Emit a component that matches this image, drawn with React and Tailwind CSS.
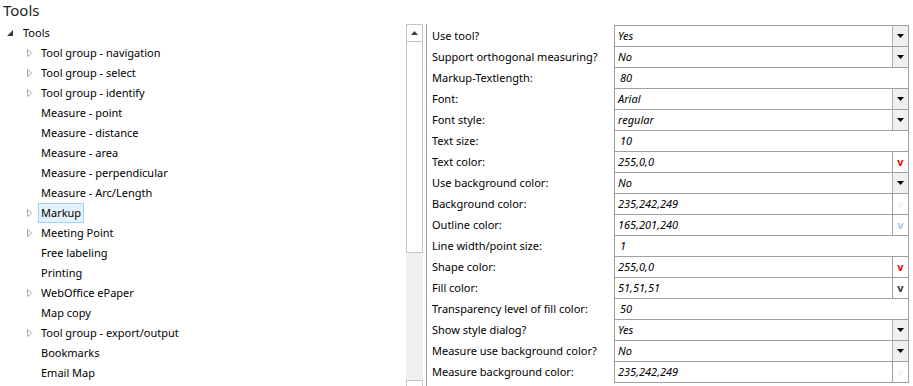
import React from 'react';

const tree = [
  { label: 'Tool group - navigation', expandable: true },
  { label: 'Tool group - select', expandable: true },
  { label: 'Tool group - identify', expandable: true },
  { label: 'Measure - point' },
  { label: 'Measure - distance' },
  { label: 'Measure - area' },
  { label: 'Measure - perpendicular' },
  { label: 'Measure - Arc/Length' },
  { label: 'Markup', expandable: true, selected: true },
  { label: 'Meeting Point', expandable: true },
  { label: 'Free labeling' },
  { label: 'Printing' },
  { label: 'WebOffice ePaper', expandable: true },
  { label: 'Map copy' },
  { label: 'Tool group - export/output', expandable: true },
  { label: 'Bookmarks' },
  { label: 'Email Map' },
];

const props = [
  { label: 'Use tool?', value: 'Yes', type: 'select' },
  { label: 'Support orthogonal measuring?', value: 'No', type: 'select' },
  { label: 'Markup-Textlength:', value: '80', type: 'text' },
  { label: 'Font:', value: 'Arial', type: 'select' },
  { label: 'Font style:', value: 'regular', type: 'select' },
  { label: 'Text size:', value: '10', type: 'text' },
  { label: 'Text color:', value: '255,0,0', type: 'color' },
  { label: 'Use background color:', value: 'No', type: 'select' },
  { label: 'Background color:', value: '235,242,249', type: 'color' },
  { label: 'Outline color:', value: '165,201,240', type: 'color' },
  { label: 'Line width/point size:', value: '1', type: 'text' },
  { label: 'Shape color:', value: '255,0,0', type: 'color' },
  { label: 'Fill color:', value: '51,51,51', type: 'color' },
  { label: 'Transparency level of fill color:', value: '50', type: 'text' },
  { label: 'Show style dialog?', value: 'Yes', type: 'select' },
  { label: 'Measure use background color?', value: 'No', type: 'select' },
  { label: 'Measure background color:', value: '235,242,249', type: 'color' },
];

const font = { fontFamily: '"Noto Sans", "Open Sans", sans-serif' };

function OpenArrow() {
  return (
    <svg width="7" height="10" viewBox="0 0 7 10" className="shrink-0">
      <path d="M1.5 1.5 L5.5 5 L1.5 8.5 Z" fill="none" stroke="#a6a6a6" strokeWidth="1" />
    </svg>
  );
}

function TreeRow({ item }) {
  return (
    <div className="flex h-[20px] items-center pl-[26px]">
      <div className="w-[15px] flex items-center">{item.expandable && <OpenArrow />}</div>
      {item.selected ? (
        <span className="-ml-[3px] px-[2px] border border-[#99d1ff] bg-[#e5f3fb] leading-[18px]">{item.label}</span>
      ) : (
        <span>{item.label}</span>
      )}
    </div>
  );
}

function DropButton() {
  return (
    <div className="w-[16px] h-full bg-[#f0f0f0] border-l border-[#adadad] flex items-center justify-center">
      <svg width="7" height="4" viewBox="0 0 7 4">
        <path d="M0 0 H7 L3.5 4 Z" fill="#000" />
      </svg>
    </div>
  );
}

function ValueCell({ p }) {
  const col = p.type === 'color' ? `rgb(${p.value})` : undefined;
  return (
    <div className="flex h-full flex-1 items-center border-l border-[#a0a0a0]">
      <span className={`flex-1 italic ${p.type === 'text' ? 'pl-[5px]' : 'pl-[3px]'}`}>{p.value}</span>
      {p.type === 'select' && <DropButton />}
      {p.type === 'color' && (
        <div className="w-[16px] h-full border-l border-[#a0a0a0] flex items-center justify-center font-bold text-[11px]" style={{ color: col }}>
          v
        </div>
      )}
    </div>
  );
}

export default function App() {
  return (
    <div className="w-[913px] h-[386px] bg-white overflow-hidden text-[11px] text-black" style={font}>
      <div className="h-[23px] pl-[3px] text-[15px] leading-[20px] text-[#1e1e1e]">Tools</div>
      <div className="flex">
        <div className="w-[406px]">
          <div className="flex h-[20px] items-center pl-[7px]">
            <svg width="6" height="6" viewBox="0 0 6 6" className="mr-[10px]">
              <path d="M6 0 V6 H0 Z" fill="#3c3c3c" />
            </svg>
            <span>Tools</span>
          </div>
          {tree.map((t) => (
            <TreeRow key={t.label} item={t} />
          ))}
        </div>
        <div className="w-[17px] flex flex-col mt-[1px]">
          <div className="h-[18px] border border-[#c6c6c6] bg-white flex items-center justify-center">
            <svg width="7" height="4" viewBox="0 0 7 4">
              <path d="M0 4 H7 L3.5 0 Z" fill="#3c3c3c" />
            </svg>
          </div>
          <div className="h-[211px] border border-t-0 border-[#c6c6c6] bg-white" />
          <div className="h-[127px] bg-[#f0f0f0]" />
          <div className="h-[10px] border border-[#c6c6c6] bg-white" />
        </div>
        <div className="w-[3px]" />
        <div className="mt-[1px] border-l border-[#a0a0a0] flex-1 h-[363px] pt-[1px]">
          <div className="pr-[4px]">
            {props.map((p, i) => (
              <div key={p.label} className={`flex items-center ${i === 0 ? 'h-[22px]' : 'h-[21px]'}`}>
                <div className="w-[187px] pl-[5px] h-full flex items-center">{p.label}</div>
                <div className={`flex flex-1 h-full border-b border-r border-[#a0a0a0] ${i === 0 ? 'border-t' : ''}`}>
                  <ValueCell p={p} />
                </div>
              </div>
            ))}
          </div>
        </div>
      </div>
    </div>
  );
}
